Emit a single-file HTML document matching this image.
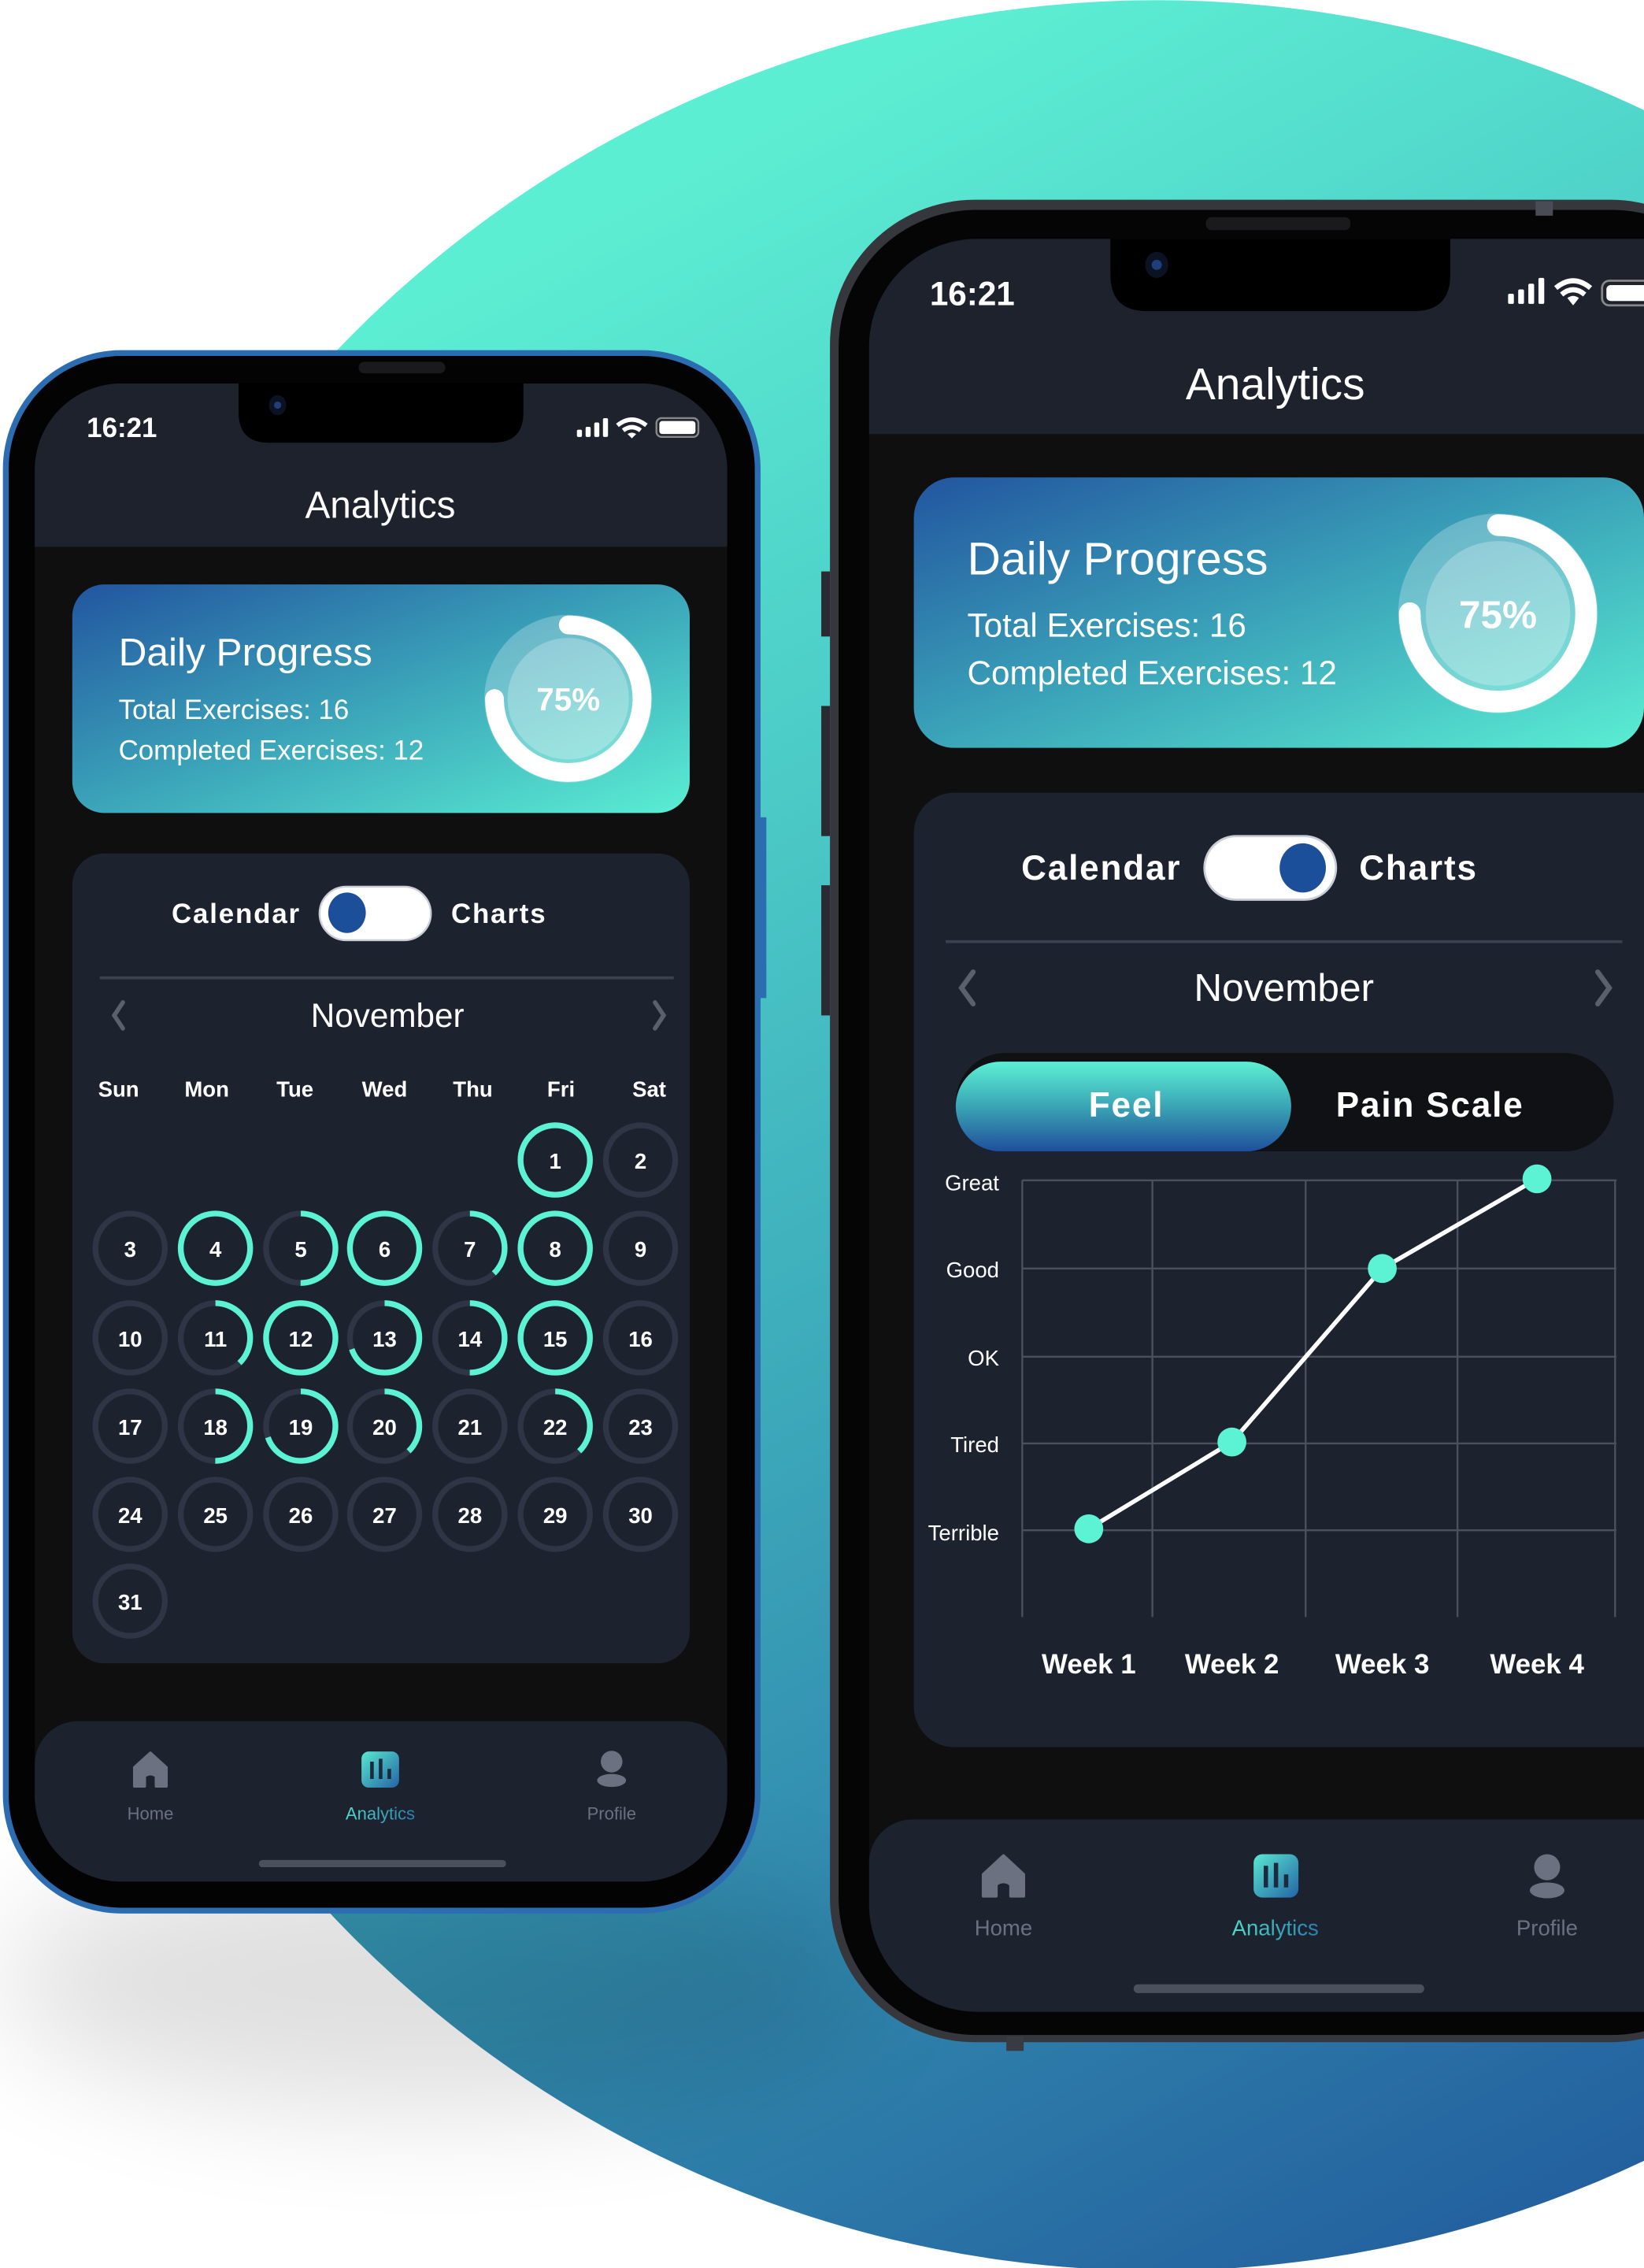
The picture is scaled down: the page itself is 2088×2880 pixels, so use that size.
<!DOCTYPE html>
<html><head><meta charset="utf-8"><style>
html,body{margin:0;padding:0;background:#fff;}
svg{display:block;}
text{font-family:"Liberation Sans",sans-serif;}
</style></head><body>
<svg width="2088" height="2880" viewBox="0 0 1137 1568" xmlns="http://www.w3.org/2000/svg">
<defs>
<linearGradient id="bgc" gradientUnits="userSpaceOnUse" x1="400" y1="150" x2="1137" y2="1568">
<stop offset="0" stop-color="#5ceed3"/><stop offset="0.45" stop-color="#3fb0bd"/><stop offset="1" stop-color="#215a9c"/></linearGradient>
<linearGradient id="card" x1="0" y1="0" x2="1" y2="1">
<stop offset="0" stop-color="#2255a0"/><stop offset="0.5" stop-color="#3ba4b9"/><stop offset="1" stop-color="#5aeed3"/></linearGradient>
<linearGradient id="pill" x1="0" y1="0" x2="0" y2="1">
<stop offset="0" stop-color="#5cf0d4"/><stop offset="0.5" stop-color="#3aa5b5"/><stop offset="1" stop-color="#1f4f9c"/></linearGradient>
<linearGradient id="ico" x1="0" y1="0" x2="1" y2="1">
<stop offset="0" stop-color="#5ae8d0"/><stop offset="1" stop-color="#2464a6"/></linearGradient>
<linearGradient id="lbl" x1="0" y1="0" x2="1" y2="0">
<stop offset="0" stop-color="#4fd9c9"/><stop offset="1" stop-color="#2a7fb0"/></linearGradient>
<filter id="blur" x="-50%" y="-50%" width="200%" height="200%"><feGaussianBlur stdDeviation="40"/></filter>
</defs>

<rect width="1137" height="1568" fill="#fff"/>
<circle cx="800" cy="785" r="785" fill="url(#bgc)"/>
<!-- shadow -->
<ellipse cx="300" cy="1370" rx="300" ry="90" fill="#000" opacity="0.12" filter="url(#blur)"/>

<!-- ============ RIGHT PHONE ============ -->
<rect x="574" y="138" width="640" height="1274" rx="100" fill="#36373d"/>
<rect x="580" y="145" width="630" height="1262" rx="95" fill="#050505"/>
<rect x="568" y="395" width="6" height="45" fill="#2a2b30"/>
<rect x="568" y="488" width="6" height="90" fill="#2a2b30"/>
<rect x="568" y="612" width="6" height="90" fill="#2a2b30"/>
<rect x="1062" y="139" width="12" height="10" fill="#4a4c55"/>
<rect x="696" y="1408" width="12" height="10" fill="#3a3b42"/>
<rect x="834" y="150" width="100" height="9" rx="4" fill="#1a1a1c"/>
<clipPath id="rs"><rect x="601" y="165" width="620" height="1226" rx="75"/></clipPath>
<g clip-path="url(#rs)">
<rect x="601" y="165" width="620" height="1226" fill="#0f0f10"/>
<rect x="601" y="165" width="620" height="135" fill="#1d222d"/>
<path d="M768 165 H1003 V190 Q1003 215 978 215 H793 Q768 215 768 190 Z" fill="#000"/>
<ellipse cx="800" cy="183" rx="8" ry="9" fill="#0b1222"/><circle cx="800" cy="183" r="3.5" fill="#1f3f7a"/>
<text x="643" y="211" font-size="23" fill="#fff" font-weight="bold">16:21</text>
<rect x="1043" y="203" width="4" height="7" rx="1" fill="#fff"/>
<rect x="1050" y="200" width="4" height="10" rx="1" fill="#fff"/>
<rect x="1057" y="196" width="4" height="14" rx="1" fill="#fff"/>
<rect x="1064" y="192" width="4" height="18" rx="1" fill="#fff"/>
<path d="M1076 199 Q1088 189 1100 199" stroke="#fff" stroke-width="3.5" fill="none"/>
<path d="M1080 203.5 Q1088 197 1096 203.5" stroke="#fff" stroke-width="3.5" fill="none"/>
<path d="M1084 206 L1088 211 L1092 206 Q1088 203 1084 206Z" fill="#fff"/>
<rect x="1108" y="194" width="40" height="17" rx="5" fill="none" stroke="#888" stroke-width="1.5"/>
<rect x="1111" y="197" width="34" height="11" rx="3" fill="#fff"/>
<text x="882" y="276" font-size="31" fill="#fff" text-anchor="middle">Analytics</text>

<rect x="632" y="330" width="505" height="187" rx="28" fill="url(#card)"/>
<text x="669" y="397" font-size="32" fill="#fff">Daily Progress</text>
<text x="669" y="440" font-size="23" fill="#fff">Total Exercises: 16</text>
<text x="669" y="473" font-size="23" fill="#fff">Completed Exercises: 12</text>
<circle cx="1036" cy="424" r="69" fill="#fff" opacity="0.25"/>
<circle cx="1036" cy="424" r="50" fill="#fff" opacity="0.25"/>
<circle cx="1036" cy="424" r="61" fill="none" stroke="#fff" stroke-width="15" stroke-linecap="round" stroke-dasharray="287.5 400" transform="rotate(-90 1036 424)"/>
<text x="1036" y="434" font-size="27" fill="#fff" font-weight="bold" text-anchor="middle">75%</text>

<rect x="632" y="548" width="530" height="660" rx="28" fill="#1d222f"/>
<text x="817" y="608" font-size="24" fill="#fff" font-weight="bold" text-anchor="end" letter-spacing="1">Calendar</text>
<rect x="833" y="578" width="91" height="44" rx="22" fill="#fff" stroke="#c9cdd6" stroke-width="1.5"/>
<ellipse cx="901" cy="600" rx="16" ry="17" fill="#1c4f9a"/>
<text x="940" y="608" font-size="24" fill="#fff" font-weight="bold" letter-spacing="1">Charts</text>
<rect x="654" y="650" width="468" height="2" fill="#3b414f"/>
<path d="M673 672 L665 683 L673 694" stroke="#5a606c" stroke-width="3.5" fill="none" stroke-linecap="round"/>
<path d="M1105 672 L1113 683 L1105 694" stroke="#5a606c" stroke-width="3.5" fill="none" stroke-linecap="round"/>
<text x="888" y="692" font-size="27" fill="#fff" text-anchor="middle">November</text>
<rect x="661" y="728" width="455" height="68" rx="34" fill="#101114"/>
<rect x="661" y="734" width="232" height="62" rx="31" fill="url(#pill)"/>
<text x="779" y="772" font-size="24" fill="#fff" font-weight="bold" text-anchor="middle" letter-spacing="1">Feel</text>
<text x="989" y="772" font-size="24" fill="#fff" font-weight="bold" text-anchor="middle" letter-spacing="1">Pain Scale</text>

<g stroke="#4a505d" stroke-width="1.3">
<line x1="707" y1="816" x2="1118" y2="816"/><line x1="707" y1="877" x2="1118" y2="877"/>
<line x1="707" y1="938" x2="1118" y2="938"/><line x1="707" y1="998" x2="1118" y2="998"/>
<line x1="707" y1="1058" x2="1118" y2="1058"/>
<line x1="707" y1="816" x2="707" y2="1118"/><line x1="797" y1="816" x2="797" y2="1118"/>
<line x1="903" y1="816" x2="903" y2="1118"/><line x1="1008" y1="816" x2="1008" y2="1118"/>
<line x1="1117" y1="816" x2="1117" y2="1118"/>
</g>
<g font-size="15" fill="#fff" text-anchor="end">
<text x="691" y="823">Great</text><text x="691" y="883">Good</text><text x="691" y="944">OK</text>
<text x="691" y="1004">Tired</text><text x="691" y="1065">Terrible</text>
</g>
<polyline points="753,1057 852,997 956,877 1063,815" fill="none" stroke="#fff" stroke-width="3"/>
<g fill="#5cf3d4">
<ellipse cx="753" cy="1057" rx="10" ry="10"/><ellipse cx="852" cy="997" rx="10" ry="10"/>
<ellipse cx="956" cy="877" rx="10" ry="10"/><ellipse cx="1063" cy="815" rx="10" ry="10"/>
</g>
<g font-size="19" fill="#fff" font-weight="bold" text-anchor="middle">
<text x="753" y="1157">Week 1</text><text x="852" y="1157">Week 2</text>
<text x="956" y="1157">Week 3</text><text x="1063" y="1157">Week 4</text>
</g>

<rect x="601" y="1258" width="620" height="140" fill="#1d222f" rx="30"/>
<path d="M680 1296 L694 1283 L708 1296 V1311 H699 V1303 Q694 1299 689 1303 V1311 H680 Z" fill="#6b7180" stroke="#6b7180" stroke-width="2" stroke-linejoin="round"/>
<rect x="867" y="1282" width="31" height="30" rx="6" fill="url(#ico)"/>
<rect x="874" y="1290" width="3" height="15" fill="#1a2b3d"/><rect x="881" y="1288" width="3" height="17" fill="#1a2b3d"/><rect x="888" y="1296" width="3" height="9" fill="#1a2b3d"/>
<circle cx="1070" cy="1291" r="9" fill="#6b7180"/>
<ellipse cx="1070" cy="1307" rx="12" ry="5.5" fill="#6b7180"/>
<text x="694" y="1338" font-size="15" fill="#6b7180" text-anchor="middle">Home</text>
<text x="882" y="1338" font-size="15" fill="url(#lbl)" text-anchor="middle">Analytics</text>
<text x="1070" y="1338" font-size="15" fill="#6b7180" text-anchor="middle">Profile</text>
<rect x="784" y="1372" width="201" height="6" rx="3" fill="#4a505c"/>
</g>

<!-- ============ LEFT PHONE ============ -->
<rect x="2" y="242" width="524" height="1081" rx="82" fill="#2c6cb0"/>
<rect x="6" y="246" width="516" height="1073" rx="78" fill="#030303"/>
<rect x="526" y="565" width="4" height="125" fill="#2c6cb0"/>
<rect x="248" y="250" width="60" height="8" rx="4" fill="#1a1a1c"/>
<clipPath id="ls"><rect x="24" y="265" width="479" height="1036" rx="60"/></clipPath>
<g clip-path="url(#ls)">
<rect x="24" y="265" width="479" height="1036" fill="#0f0f10"/>
<rect x="24" y="265" width="479" height="113" fill="#1d222d"/>
<path d="M165 265 H362 V285 Q362 306 341 306 H186 Q165 306 165 285 Z" fill="#000"/>
<ellipse cx="192" cy="280" rx="6" ry="7" fill="#0b1222"/><circle cx="192" cy="280" r="2.5" fill="#1f3f7a"/>
<text x="60" y="302" font-size="19" fill="#fff" font-weight="bold">16:21</text>
<rect x="399" y="297" width="3.5" height="5" rx="1" fill="#fff"/>
<rect x="405" y="295" width="3.5" height="7" rx="1" fill="#fff"/>
<rect x="411" y="292" width="3.5" height="10" rx="1" fill="#fff"/>
<rect x="417" y="289" width="3.5" height="13" rx="1" fill="#fff"/>
<path d="M427 294 Q437 286 447 294" stroke="#fff" stroke-width="3" fill="none"/>
<path d="M431 297.5 Q437 293 443 297.5" stroke="#fff" stroke-width="3" fill="none"/>
<path d="M434 300 L437 303 L440 300 Q437 298 434 300Z" fill="#fff"/>
<rect x="454" y="289" width="29" height="13" rx="3.5" fill="none" stroke="#888" stroke-width="1.3"/>
<rect x="456" y="291" width="25" height="9" rx="2" fill="#fff"/>
<text x="263" y="358" font-size="26" fill="#fff" text-anchor="middle">Analytics</text>

<rect x="50" y="404" width="427" height="158" rx="22" fill="url(#card)"/>
<text x="82" y="460" font-size="27" fill="#fff">Daily Progress</text>
<text x="82" y="497" font-size="19" fill="#fff">Total Exercises: 16</text>
<text x="82" y="525" font-size="19" fill="#fff">Completed Exercises: 12</text>
<circle cx="393" cy="483" r="58" fill="#fff" opacity="0.25"/>
<circle cx="393" cy="483" r="42" fill="#fff" opacity="0.25"/>
<circle cx="393" cy="483" r="51" fill="none" stroke="#fff" stroke-width="13" stroke-linecap="round" stroke-dasharray="240.3 400" transform="rotate(-90 393 483)"/>
<text x="393" y="491" font-size="22" fill="#fff" font-weight="bold" text-anchor="middle">75%</text>

<rect x="50" y="590" width="427" height="560" rx="22" fill="#1d222f"/>
<text x="208" y="638" font-size="19" fill="#fff" font-weight="bold" text-anchor="end" letter-spacing="1">Calendar</text>
<rect x="221" y="613" width="77" height="37" rx="18.5" fill="#fff" stroke="#c9cdd6" stroke-width="1.3"/>
<ellipse cx="240" cy="631" rx="13" ry="14" fill="#1c4f9a"/>
<text x="312" y="638" font-size="19" fill="#fff" font-weight="bold" letter-spacing="1">Charts</text>
<rect x="69" y="675" width="397" height="2" fill="#3b414f"/>
<path d="M85 693 L79 702 L85 711" stroke="#5a606c" stroke-width="3" fill="none" stroke-linecap="round"/>
<path d="M453 693 L459 702 L453 711" stroke="#5a606c" stroke-width="3" fill="none" stroke-linecap="round"/>
<text x="268" y="710" font-size="23" fill="#fff" text-anchor="middle">November</text>
<g font-size="15" fill="#fff" font-weight="bold" text-anchor="middle">
<text x="82" y="758">Sun</text><text x="143" y="758">Mon</text><text x="204" y="758">Tue</text>
<text x="266" y="758">Wed</text><text x="327" y="758">Thu</text><text x="388" y="758">Fri</text><text x="449" y="758">Sat</text>
</g>
<!-- days -->
<g fill="none" stroke="#2f3544" stroke-width="4">
<circle cx="384" cy="802" r="24"/><circle cx="443" cy="802" r="24"/>
<circle cx="90" cy="863" r="24"/><circle cx="149" cy="863" r="24"/><circle cx="208" cy="863" r="24"/><circle cx="266" cy="863" r="24"/><circle cx="325" cy="863" r="24"/><circle cx="384" cy="863" r="24"/><circle cx="443" cy="863" r="24"/>
<circle cx="90" cy="925" r="24"/><circle cx="149" cy="925" r="24"/><circle cx="208" cy="925" r="24"/><circle cx="266" cy="925" r="24"/><circle cx="325" cy="925" r="24"/><circle cx="384" cy="925" r="24"/><circle cx="443" cy="925" r="24"/>
<circle cx="90" cy="986" r="24"/><circle cx="149" cy="986" r="24"/><circle cx="208" cy="986" r="24"/><circle cx="266" cy="986" r="24"/><circle cx="325" cy="986" r="24"/><circle cx="384" cy="986" r="24"/><circle cx="443" cy="986" r="24"/>
<circle cx="90" cy="1047" r="24"/><circle cx="149" cy="1047" r="24"/><circle cx="208" cy="1047" r="24"/><circle cx="266" cy="1047" r="24"/><circle cx="325" cy="1047" r="24"/><circle cx="384" cy="1047" r="24"/><circle cx="443" cy="1047" r="24"/>
<circle cx="90" cy="1107" r="24"/>
</g>
<g fill="none" stroke="#5cf3d4" stroke-width="4">
<circle cx="384" cy="802" r="24"/>
<circle cx="149" cy="863" r="24"/><circle cx="266" cy="863" r="24"/><circle cx="384" cy="863" r="24"/>
<circle cx="208" cy="925" r="24"/><circle cx="384" cy="925" r="24"/>
<circle cx="208" cy="863" r="24" stroke-dasharray="75.4 200" transform="rotate(-90 208 863)"/>
<circle cx="325" cy="863" r="24" stroke-dasharray="57 200" transform="rotate(-90 325 863)"/>
<circle cx="149" cy="925" r="24" stroke-dasharray="57 200" transform="rotate(-90 149 925)"/>
<circle cx="266" cy="925" r="24" stroke-dasharray="105 200" transform="rotate(-90 266 925)"/>
<circle cx="325" cy="925" r="24" stroke-dasharray="75.4 200" transform="rotate(-90 325 925)"/>
<circle cx="149" cy="986" r="24" stroke-dasharray="75.4 200" transform="rotate(-90 149 986)"/>
<circle cx="208" cy="986" r="24" stroke-dasharray="105 200" transform="rotate(-90 208 986)"/>
<circle cx="266" cy="986" r="24" stroke-dasharray="57 200" transform="rotate(-90 266 986)"/>
<circle cx="384" cy="986" r="24" stroke-dasharray="57 200" transform="rotate(-90 384 986)"/>
</g>
<g font-size="15" fill="#fff" font-weight="bold" text-anchor="middle">
<text x="384" y="808">1</text><text x="443" y="808">2</text>
<text x="90" y="869">3</text><text x="149" y="869">4</text><text x="208" y="869">5</text><text x="266" y="869">6</text><text x="325" y="869">7</text><text x="384" y="869">8</text><text x="443" y="869">9</text>
<text x="90" y="931">10</text><text x="149" y="931">11</text><text x="208" y="931">12</text><text x="266" y="931">13</text><text x="325" y="931">14</text><text x="384" y="931">15</text><text x="443" y="931">16</text>
<text x="90" y="992">17</text><text x="149" y="992">18</text><text x="208" y="992">19</text><text x="266" y="992">20</text><text x="325" y="992">21</text><text x="384" y="992">22</text><text x="443" y="992">23</text>
<text x="90" y="1053">24</text><text x="149" y="1053">25</text><text x="208" y="1053">26</text><text x="266" y="1053">27</text><text x="325" y="1053">28</text><text x="384" y="1053">29</text><text x="443" y="1053">30</text>
<text x="90" y="1113">31</text>
</g>

<rect x="24" y="1190" width="479" height="130" rx="30" fill="#1d222f"/>
<path d="M93 1222 L104 1212 L115 1222 V1235 H108 V1228 Q104 1225 100 1228 V1235 H93 Z" fill="#6b7180" stroke="#6b7180" stroke-width="2" stroke-linejoin="round"/>
<rect x="250" y="1211" width="26" height="25" rx="5" fill="url(#ico)"/>
<rect x="256" y="1218" width="2.5" height="12" fill="#1a2b3d"/><rect x="262" y="1216" width="2.5" height="14" fill="#1a2b3d"/><rect x="268" y="1223" width="2.5" height="7" fill="#1a2b3d"/>
<circle cx="423" cy="1218" r="7.5" fill="#6b7180"/>
<ellipse cx="423" cy="1231" rx="10" ry="4.5" fill="#6b7180"/>
<text x="104" y="1258" font-size="12" fill="#6b7180" text-anchor="middle">Home</text>
<text x="263" y="1258" font-size="12" fill="url(#lbl)" text-anchor="middle">Analytics</text>
<text x="423" y="1258" font-size="12" fill="#6b7180" text-anchor="middle">Profile</text>
<rect x="179" y="1286" width="171" height="5" rx="2.5" fill="#4a505c"/>
</g>
</svg>
</body></html>
